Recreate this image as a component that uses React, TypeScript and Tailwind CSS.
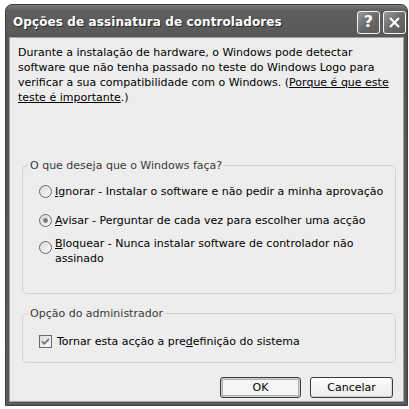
import React from "react";

const font = { fontFamily: '"DejaVu Sans", "Liberation Sans", sans-serif' };

function Radio({ checked, id }: { checked?: boolean; id: string }) {
  return (
    <svg width="13" height="13" viewBox="0 0 13 13" className="shrink-0">
      <defs>
        <linearGradient id={id} x1="0" y1="0" x2="1" y2="1">
          <stop offset="0" stopColor="#d6d6d6" />
          <stop offset="1" stopColor="#ffffff" />
        </linearGradient>
      </defs>
      <circle cx="6.5" cy="6.5" r="6" fill={`url(#${id})`} stroke="#6a6a6a" strokeWidth="1" />
      {checked && <circle cx="6.5" cy="6.5" r="2.4" fill="#7a7a7a" />}
    </svg>
  );
}

function Check() {
  return (
    <svg width="13" height="13" viewBox="0 0 13 13" className="shrink-0">
      <defs>
        <linearGradient id="cg" x1="0" y1="0" x2="1" y2="1">
          <stop offset="0" stopColor="#dcdcdc" />
          <stop offset="1" stopColor="#fafafa" />
        </linearGradient>
      </defs>
      <rect x="0.5" y="0.5" width="12" height="12" fill="url(#cg)" stroke="#6a6a6a" />
      <path d="M3 6.3 L5.3 8.8 L10 3.8" fill="none" stroke="#727272" strokeWidth="1.7" />
    </svg>
  );
}

function Btn({ children, def, w }: { children: React.ReactNode; def?: boolean; w: string }) {
  return (
    <div
      className={`flex items-center justify-center ${w} h-[21px] rounded-[3px] border border-[#3c3c3c] text-[11px] text-black ${
        def
          ? "bg-[#f5f5f5] shadow-[inset_0_0_0_1px_#cfcfcf,inset_0_0_0_2px_#b0b0b0]"
          : "bg-[linear-gradient(#fdfdfd,#ebebeb)] shadow-[inset_0_-1px_0_#cfcfcf,inset_-1px_0_0_#dcdcdc]"
      }`}
    >
      {children}
    </div>
  );
}

export default function App() {
  return (
    <div className="w-[409px] h-[409px] bg-white pl-[5px] pt-[4px]" style={font}>
      <div className="w-[403px] h-[402px] flex flex-col rounded-t-[7px] bg-[linear-gradient(#7c7c7c,#5e5e5e_5px,#5a5a5a_26px,#555555_34px,#5a5a5a)] border border-[#3e3e3e]">
        <div className="h-[32px] flex items-center pl-[7px] pr-[1px] shrink-0">
          <div className="flex-1 text-white font-bold text-[12px] tracking-[0.1px] [text-shadow:1px_1px_0_#2a2a2a] pt-[1px]">
            Opções de assinatura de controladores
          </div>
          <div className="flex gap-[3px] mt-[2px]">
            <div className="w-[23px] h-[23px] rounded-[3px] border border-[#f2f2f2] bg-[linear-gradient(135deg,#9a9a9a,#6a6a6a_50%,#5a5a5a)] flex items-center justify-center text-white font-bold text-[16px] leading-none">
              ?
            </div>
            <div className="w-[23px] h-[23px] rounded-[3px] border border-[#f2f2f2] bg-[linear-gradient(135deg,#9a9a9a,#6a6a6a_50%,#5a5a5a)] flex items-center justify-center">
              <svg width="13" height="13" viewBox="0 0 13 13">
                <path d="M2 2 L11 11 M11 2 L2 11" stroke="white" strokeWidth="2.2" />
              </svg>
            </div>
          </div>
        </div>
        <div className="flex-1 mx-[3px] mb-[3px] bg-[#ededed] border border-[#a0a0a0] flex flex-col text-[11px] text-black leading-[15px] px-[8px]">
          <p className="mt-[7px]">
            Durante a instalação de hardware, o Windows pode detectar software que não tenha passado no teste do Windows Logo para verificar a sua compatibilidade com o Windows. (
            <span className="underline">Porque é que este teste é importante</span>.)
          </p>

          <div className="relative mt-[60px] ml-[4px] mr-[-1px] h-[129px] border border-[#d2d2d2] rounded-[5px] pl-[16px] pt-[18px]">
            <span className="absolute top-[-8px] left-[5px] px-[2px] bg-[#ededed] text-[#3a3a3a]">
              O que deseja que o Windows faça?
            </span>
            <div className="flex items-center gap-[3px]">
              <Radio id="r1" />
              <span>
                <span className="underline">I</span>gnorar - Instalar o software e não pedir a minha aprovação
              </span>
            </div>
            <div className="flex items-center gap-[3px] mt-[14px]">
              <Radio id="r2" checked />
              <span>
                <span className="underline">A</span>visar - Perguntar de cada vez para escolher uma acção
              </span>
            </div>
            <div className="flex items-start gap-[3px] mt-[8px] pr-[24px]">
              <div className="mt-[5px]">
                <Radio id="r3" />
              </div>
              <span>
                <span className="underline">B</span>loquear - Nunca instalar software de controlador não assinado
              </span>
            </div>
          </div>

          <div className="relative mt-[19px] ml-[4px] mr-[-1px] h-[50px] border border-[#d2d2d2] rounded-[5px] pl-[16px] pt-[20px]">
            <span className="absolute top-[-8px] left-[5px] px-[2px] bg-[#ededed] text-[#3a3a3a]">
              Opção do administrador
            </span>
            <div className="flex items-center gap-[5px]">
              <Check />
              <span>
                Tornar esta acção a pre<span className="underline">d</span>efinição do sistema
              </span>
            </div>
          </div>

          <div className="mt-[14px] flex justify-end gap-[9px] pr-[2px]">
            <Btn def w="w-[81px]">OK</Btn>
            <Btn w="w-[83px]">Cancelar</Btn>
          </div>
        </div>
      </div>
    </div>
  );
}
